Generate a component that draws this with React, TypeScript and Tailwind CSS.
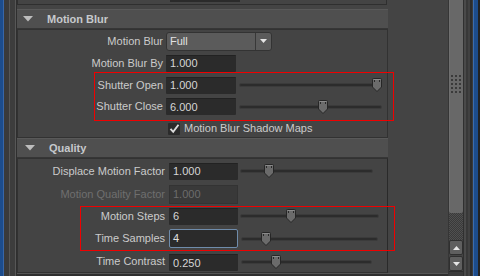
import React from 'react';

type SliderProps = { width: number; pos: number };

// thin groove with the shield shaped Maya handle
function Slider({ width, pos }: SliderProps) {
  return (
    <div className="relative h-[14px] shrink-0" style={{ width }}>
      <div className="absolute left-0 right-0 top-[5px] h-[4px] rounded-full bg-[#2c2c2c] border border-[#3b3b3b]" />
      <svg className="absolute top-0" style={{ left: pos - 5 }} width="10" height="14" viewBox="0 0 10 14">
        <path
          d="M1.5 0.5 H8.5 Q9.5 0.5 9.5 1.5 V9 L5 13.5 L0.5 9 V1.5 Q0.5 0.5 1.5 0.5 Z"
          fill="#6b6b6b"
          stroke="#262626"
        />
        <path d="M1.5 1.5 H8.5" stroke="#8a8a8a" />
        <rect x="2" y="2" width="1" height="2" fill="#2a2a2a" />
        <rect x="7" y="2" width="1" height="2" fill="#2a2a2a" />
      </svg>
    </div>
  );
}

function Field({ value, className = '' }: { value: string; className?: string }) {
  return (
    <div
      className={`h-[17px] shrink-0 rounded-[1px] bg-[#2b2b2b] border-t border-[#222] pl-[4px] flex items-center text-[#d6d6d6] ${className}`}
    >
      {value}
    </div>
  );
}

function Triangle() {
  return (
    <svg width="10" height="6" viewBox="0 0 10 6" className="shrink-0">
      <path d="M0 0 H10 L5 5.5 Z" fill="#bdbdbd" />
    </svg>
  );
}

function Header({ title, indent }: { title: string; indent: string }) {
  return (
    <div className="w-[371px] h-[20px] shrink-0 bg-[#4f4f4f] border-t border-[#595959] border-b border-b-[#363636] flex items-center">
      <div className={`flex items-center ${indent}`}>
        <Triangle />
        <span className="ml-[14px] font-bold text-[#c6c9cc]">{title}</span>
      </div>
    </div>
  );
}

export default function App() {
  return (
    <div className="relative w-[480px] h-[276px] overflow-hidden bg-[#444444] flex font-['Liberation_Sans',Arial,sans-serif] text-[11px] text-[#cbcbcb]">
      {/* left window edge */}
      <div className="flex h-full shrink-0">
        <div className="w-[4px] bg-[#1c4c8c] border-r border-[#3866a6]" />
        <div className="w-[5px] bg-[#3a3a3a]" />
        <div className="w-[1px] bg-[#565656]" />
        <div className="w-[5px] bg-[#3d3d3d]" />
        <div className="w-[1px] bg-[#575757]" />
        <div className="w-[1px] bg-[#2f2f2f]" />
      </div>

      {/* attribute panels */}
      <div className="w-[431px] h-full flex flex-col shrink-0">
        <div className="h-[9px] shrink-0">
          <div className="w-[370px] h-[5px] border-x border-b border-[#2f2f2f]">
            <div className="ml-[152px] w-[70px] h-[2px] bg-[#2b2b2b]" />
          </div>
        </div>

        <Header title="Motion Blur" indent="ml-[6px]" />
        <div className="w-[371px] h-[109px] shrink-0 border border-[#323232] flex flex-col">
          <div className="h-[22px] flex items-center">
            <span className="w-[145px] text-right shrink-0">Motion Blur</span>
            <div className="ml-[3px] w-[106px] h-[19px] rounded-[3px] bg-[#5b5b5b] border border-[#333] flex">
              <span className="flex-1 pl-[3px] flex items-center text-[#e2e2e2]">Full</span>
              <div className="w-[16px] border-l border-[#383838] flex items-center justify-center">
                <svg width="7" height="4" viewBox="0 0 7 4">
                  <path d="M0 0 H7 L3.5 4 Z" fill="#e6e6e6" />
                </svg>
              </div>
            </div>
          </div>
          <div className="h-[22px] flex items-center">
            <span className="w-[145px] text-right shrink-0">Motion Blur By</span>
            <Field value="1.000" className="ml-[3px] w-[70px]" />
          </div>
          <div className="h-[22px] flex items-center">
            <span className="w-[145px] text-right shrink-0">Shutter Open</span>
            <Field value="1.000" className="ml-[3px] w-[70px]" />
            <div className="ml-[3px]">
              <Slider width={143} pos={138} />
            </div>
          </div>
          <div className="h-[21px] flex items-center">
            <span className="w-[145px] text-right shrink-0">Shutter Close</span>
            <Field value="6.000" className="ml-[3px] w-[70px]" />
            <div className="ml-[3px]">
              <Slider width={143} pos={84} />
            </div>
          </div>
          <div className="h-[20px] pt-[3px] flex items-center">
            <div className="ml-[150px] w-[12px] h-[12px] bg-[#2b2b2b] rounded-[1px] flex items-center justify-center">
              <svg width="11" height="11" viewBox="0 0 11 11">
                <path d="M1.5 5.8 L4.2 8.8 L9.5 1.8" fill="none" stroke="#dcdcdc" strokeWidth="1.9" />
              </svg>
            </div>
            <span className="ml-[4px]">Motion Blur Shadow Maps</span>
          </div>
        </div>

        <Header title="Quality" indent="ml-[8px]" />
        <div className="w-[371px] flex-1 border border-[#323232] border-r-[#2a2a2a] flex flex-col overflow-hidden">
          <div className="h-[24px] flex items-center">
            <span className="w-[147px] text-right shrink-0">Displace Motion Factor</span>
            <Field value="1.000" className="ml-[4px] w-[69px]" />
            <div className="ml-[2px]">
              <Slider width={133} pos={29} />
            </div>
          </div>
          <div className="h-[22px] flex items-center">
            <span className="w-[147px] text-right shrink-0 text-[#6f6f6f]">Motion Quality Factor</span>
            <div className="ml-[4px] w-[69px] h-[19px] bg-[#393939] border border-[#333] pl-[3px] flex items-center text-[#6c6c6c]">
              1.000
            </div>
          </div>
          <div className="h-[22px] flex items-center">
            <span className="w-[147px] text-right shrink-0">Motion Steps</span>
            <Field value="6" className="ml-[4px] w-[69px]" />
            <div className="ml-[2px]">
              <Slider width={139} pos={51} />
            </div>
          </div>
          <div className="h-[23px] flex items-center">
            <span className="w-[147px] text-right shrink-0">Time Samples</span>
            <div className="ml-[4px] w-[69px] h-[19px] rounded-[2px] bg-[#2b2b2b] border border-[#6f8cab] pl-[3px] flex items-center text-[#e0e0e0]">
              4
            </div>
            <div className="ml-[3px]">
              <Slider width={137} pos={25} />
            </div>
          </div>
          <div className="h-[22px] flex items-end pb-[1px]">
            <span className="w-[147px] text-right shrink-0 pb-[2px]">Time Contrast</span>
            <Field value="0.250" className="ml-[4px] w-[69px]" />
            <div className="ml-[3px] pb-[2px]">
              <Slider width={131} pos={35} />
            </div>
          </div>
        </div>
        <div className="h-[3px] shrink-0 bg-[#2f2f2f] border-t border-[#555]" />
      </div>

      {/* scrollbar */}
      <div className="w-[15px] h-full shrink-0 border-l border-[#363636] flex flex-col">
        <div className="h-[213px] shrink-0 bg-[#686868] border-l border-[#707070] rounded-b-[2px]">
          <div className="mt-[75px] ml-[1px] grid grid-cols-3 gap-[2px] w-fit">
            {Array.from({ length: 15 }).map((_, i) => (
              <div key={i} className="w-[2px] h-[2px] bg-[#3a3a3a]" />
            ))}
          </div>
        </div>
        <div className="h-[27px] shrink-0 bg-[repeating-conic-gradient(#3a3a3a_0%_25%,#505050_0%_50%)] bg-[length:2px_2px]" />
        <div className="h-[15px] shrink-0 rounded-[2px] bg-[#5f5f5f] border border-[#2f2f2f] flex items-center justify-center">
          <svg width="7" height="4" viewBox="0 0 7 4">
            <path d="M0 4 H7 L3.5 0 Z" fill="#e6e6e6" />
          </svg>
        </div>
        <div className="mt-[1px] h-[15px] shrink-0 rounded-[2px] bg-[#5f5f5f] border border-[#2f2f2f] flex items-center justify-center">
          <svg width="7" height="4" viewBox="0 0 7 4">
            <path d="M0 0 H7 L3.5 4 Z" fill="#e6e6e6" />
          </svg>
        </div>
        <div className="flex-1 bg-[#3a3a3a] border-t border-[#2c2c2c]" />
      </div>

      {/* right window edge */}
      <div className="flex h-full shrink-0">
        <div className="w-[1px] bg-[#303030]" />
        <div className="w-[2px] bg-[#4a4a4a]" />
        <div className="w-[2px] bg-[#383838]" />
        <div className="w-[2px] bg-[#414141]" />
        <div className="w-[2px] bg-[#2c2c2c]" />
        <div className="w-[1px] bg-[#3a3a3a]" />
        <div className="w-[5px] bg-[#1c4c8c] border-l border-[#3b6cae]" />
        <div className="w-[2px] bg-[#222]" />
      </div>

      {/* red annotation boxes */}
      <div className="absolute left-[94px] top-[72px] w-[300px] h-[49px] border border-[#f00000]" />
      <div className="absolute left-[80px] top-[206px] w-[315px] h-[45px] border border-[#f00000]" />
    </div>
  );
}
